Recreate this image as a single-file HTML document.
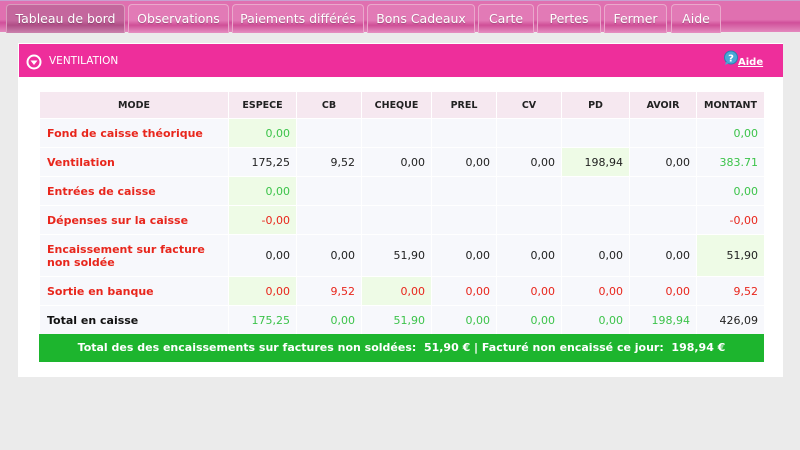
<!DOCTYPE html>
<html><head><meta charset="utf-8"><style>
*{margin:0;padding:0;box-sizing:border-box}
body{width:800px;height:450px;background:#ebebeb;font-family:"DejaVu Sans","Liberation Sans",sans-serif;position:relative;overflow:hidden}
.tabs{position:absolute;left:0;top:0;width:800px;height:32px;background:linear-gradient(#e070b0 0,#e070b0 60%,#d0509a 70%,#e489be 100%);border-top:1px solid #c8a0d0}
.tab{position:absolute;top:3px;height:29px;border:1px solid #eaa8cc;border-bottom:none;border-radius:4px 4px 0 0;color:#fff;font-size:12.5px;text-align:center;line-height:27px;background:linear-gradient(#e27ab6 0,#e27ab6 55%,#cf4f97 72%,#e690c2 100%);text-shadow:0 1px 1px rgba(0,0,0,.25)}
.tab.act{background:linear-gradient(#c4679d 0,#c4679d 55%,#b04e86 72%,#cb82ad 100%);border-color:#d99cbd}
.panel{position:absolute;left:18px;top:43px;width:765px;height:334px;background:#fff}
.hdr{position:absolute;left:1px;top:1px;width:764px;height:33px;background:#ee2e9b;color:#fff;font-size:10.5px}
table{position:absolute;left:21px;top:48px;border-collapse:separate;border-spacing:1px;font-size:11px;font-weight:bold}
td,th{background:#f7f8fc;text-align:right;padding:0 6px;height:28px}
th{background:#f6e8f0;height:26px;text-align:center;font-size:9.5px;color:#222}
td.l{text-align:left;color:#e8261c;padding-left:7px}
td.g{background:#eefbe6}
.gr{color:#3cc34a}.rd{color:#e8261c}.bk{color:#222}
tr td{font-weight:normal}
td.l{font-weight:bold}
.bar{position:absolute;left:21px;top:291px;width:725px;height:28px;background:#1db52e;color:#fff;font-size:11px;font-weight:bold;text-align:center;line-height:28px}
</style></head><body>
<div class="tabs">
<div class="tab act" style="left:6px;width:119px">Tableau de bord</div>
<div class="tab" style="left:128px;width:101px">Observations</div>
<div class="tab" style="left:232px;width:132px">Paiements différés</div>
<div class="tab" style="left:367px;width:108px">Bons Cadeaux</div>
<div class="tab" style="left:478px;width:56px">Carte</div>
<div class="tab" style="left:537px;width:64px">Pertes</div>
<div class="tab" style="left:604px;width:63px">Fermer</div>
<div class="tab" style="left:671px;width:50px">Aide</div>
</div>
<div class="panel">
<div class="hdr">
<svg style="position:absolute;left:7px;top:10px" width="16" height="16"><circle cx="8" cy="8" r="6.5" fill="none" stroke="#fff" stroke-width="2"/><path d="M4.5 6.5h7L8 11z" fill="#fff"/></svg>
<span style="position:absolute;left:30px;top:11px">VENTILATION</span>
<svg style="position:absolute;left:704px;top:6px" width="16" height="16"><circle cx="8" cy="7.5" r="6.5" fill="#4aa9d6" stroke="#2a7fb0"/><path d="M3 12l-1 3 4-2z" fill="#4aa9d6"/><text x="8" y="11.5" font-size="10" font-weight="bold" fill="#fff" text-anchor="middle" font-family="DejaVu Sans">?</text></svg>
<span style="position:absolute;left:719px;top:13px;text-decoration:underline;font-weight:bold;font-size:10px">Aide</span>
</div>
<table>
<colgroup><col style="width:188px"><col style="width:67px"><col style="width:64px"><col style="width:69px"><col style="width:64px"><col style="width:64px"><col style="width:67px"><col style="width:66px"><col style="width:67px"></colgroup>
<tr><th>MODE</th><th>ESPECE</th><th>CB</th><th>CHEQUE</th><th>PREL</th><th>CV</th><th>PD</th><th>AVOIR</th><th>MONTANT</th></tr>
<tr><td class="l">Fond de caisse théorique</td><td class="g gr">0,00</td><td></td><td></td><td></td><td></td><td></td><td></td><td class="gr">0,00</td></tr>
<tr><td class="l">Ventilation</td><td class="bk">175,25</td><td class="bk">9,52</td><td class="bk">0,00</td><td class="bk">0,00</td><td class="bk">0,00</td><td class="g bk">198,94</td><td class="bk">0,00</td><td class="gr">383.71</td></tr>
<tr><td class="l">Entrées de caisse</td><td class="g gr">0,00</td><td></td><td></td><td></td><td></td><td></td><td></td><td class="gr">0,00</td></tr>
<tr><td class="l">Dépenses sur la caisse</td><td class="g rd">-0,00</td><td></td><td></td><td></td><td></td><td></td><td></td><td class="rd">-0,00</td></tr>
<tr><td class="l" style="height:41px">Encaissement sur facture<br>non soldée</td><td class="bk">0,00</td><td class="bk">0,00</td><td class="bk">51,90</td><td class="bk">0,00</td><td class="bk">0,00</td><td class="bk">0,00</td><td class="bk">0,00</td><td class="g bk">51,90</td></tr>
<tr><td class="l">Sortie en banque</td><td class="g rd">0,00</td><td class="rd">9,52</td><td class="g rd">0,00</td><td class="rd">0,00</td><td class="rd">0,00</td><td class="rd">0,00</td><td class="rd">0,00</td><td class="rd">9,52</td></tr>
<tr><td class="l" style="color:#111">Total en caisse</td><td class="gr">175,25</td><td class="gr">0,00</td><td class="gr">51,90</td><td class="gr">0,00</td><td class="gr">0,00</td><td class="gr">0,00</td><td class="gr">198,94</td><td class="bk">426,09</td></tr>
</table>
<div class="bar">Total des des encaissements sur factures non soldées:&nbsp; 51,90 € | Facturé non encaissé ce jour:&nbsp; 198,94 €</div>
</div>
</body></html>
